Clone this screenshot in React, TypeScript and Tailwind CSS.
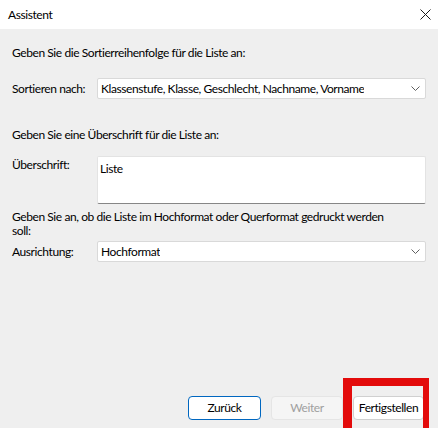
import React from "react";

const FONT = { fontFamily: 'Lato, "Segoe UI", sans-serif' };

function Chevron() {
  return (
    <svg width="9" height="5" viewBox="0 0 9 5" className="shrink-0">
      <path d="M0.5 0.5 L4.5 4.5 L8.5 0.5" fill="none" stroke="#5f5f5f" strokeWidth="1" />
    </svg>
  );
}

function Select({ value }: { value: string }) {
  return (
    <div className="flex-1 h-[21px] flex items-center justify-between bg-white border border-[#d9d9d9] rounded-[2px] pl-[3px] pr-[5px]">
      <span className="text-[12px] leading-4 text-black truncate">{value}</span>
      <Chevron />
    </div>
  );
}

export default function App() {
  return (
    <div
      className="relative w-[438px] h-[428px] overflow-hidden bg-[#efefef] flex flex-col text-black tracking-[-0.42px]"
      style={FONT}
    >
      {/* Title bar */}
      <div className="h-[29px] bg-white flex items-center justify-between pl-2 pr-[7px] shrink-0">
        <span className="text-[12px] leading-4">Assistent</span>
        <svg width="11" height="11" viewBox="0 0 11 11">
          <path d="M0.5 0.5 L10.5 10.5 M10.5 0.5 L0.5 10.5" stroke="#1a1a1a" strokeWidth="1" />
        </svg>
      </div>

      {/* Body */}
      <div className="flex-1 flex flex-col px-3 text-[12px]">
        <p className="mt-4 leading-4">Geben Sie die Sortierreihenfolge für die Liste an:</p>

        <div className="mt-[17px] flex items-center">
          <span className="w-[85px] shrink-0 leading-4 whitespace-nowrap">Sortieren nach:</span>
          <Select value="Klassenstufe, Klasse, Geschlecht, Nachname, Vorname" />
        </div>

        <p className="mt-[28px] leading-4">Geben Sie eine Überschrift für die Liste an:</p>

        <div className="mt-[13px] flex items-start">
          <span className="w-[85px] shrink-0 leading-4 pt-[1px]">Überschrift:</span>
          <div className="flex-1 h-[48px] bg-white border border-[#e3e3e3] border-b-[#868686] rounded-[2px] pl-[2px] pt-[3px]">
            <span className="leading-4">Liste</span>
          </div>
        </div>

        <p className="mt-[6px] leading-[14px]">
          Geben Sie an, ob die Liste im Hochformat oder Querformat gedruckt werden
          <br />
          soll:
        </p>

        <div className="mt-[3px] flex items-center">
          <span className="w-[85px] shrink-0 leading-4 whitespace-nowrap">Ausrichtung:</span>
          <Select value="Hochformat" />
        </div>

        {/* Buttons */}
        <div className="mt-auto mb-[8px] mr-[2px] flex justify-end gap-[10px]">
          <button className="w-[73px] h-[24px] bg-white border border-[#0067c0] rounded-[4px] text-[12px] leading-4">
            Zurück
          </button>
          <button className="w-[72px] h-[24px] bg-[#f5f5f5] border border-[#e5e5e5] rounded-[4px] text-[12px] leading-4 text-[#a0a0a0]">
            Weiter
          </button>
          <button className="w-[71px] h-[24px] bg-white border border-[#d0d0d0] rounded-[4px] text-[12px] leading-4">
            Fertigstellen
          </button>
        </div>
      </div>

      {/* Red highlight annotation */}
      <div className="absolute left-[343px] top-[378px] w-[86px] h-[60px] border-l-[9px] border-t-[8px] border-r-[6px] border-[#e30b0b]" />
    </div>
  );
}
